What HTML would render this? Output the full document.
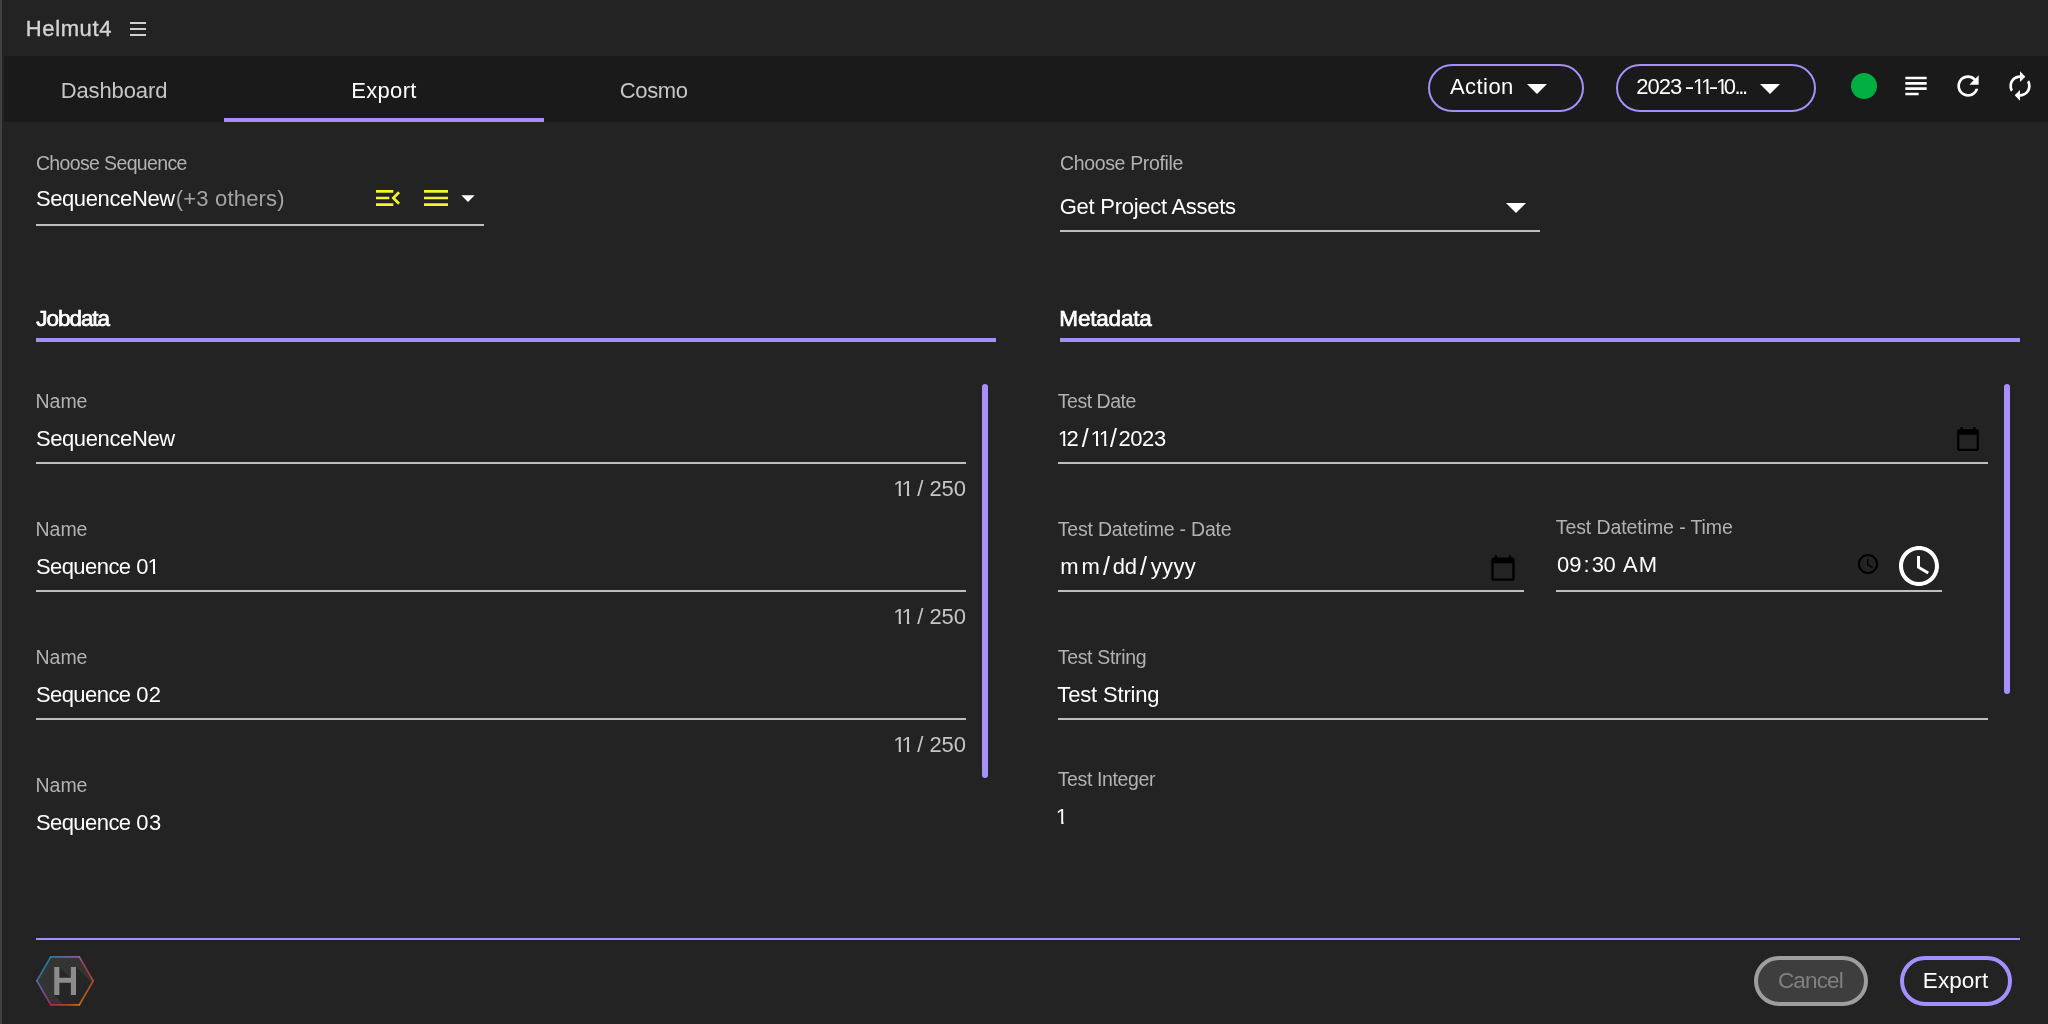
<!DOCTYPE html>
<html><head><meta charset="utf-8"><title>Helmut4</title>
<style>
html,body{margin:0;padding:0;}
body{width:2048px;height:1024px;overflow:hidden;background:#232323;position:relative;font-family:"Liberation Sans",sans-serif;}
.b{position:absolute;display:block;}
.t{position:absolute;display:block;white-space:pre;line-height:1;}
</style></head><body>
<div class="b" style="left:0px;top:0px;width:2px;height:1024px;background:#404040;"></div>
<div class="b" style="left:4px;top:56px;width:2044px;height:66px;background:#1a1a1a;"></div>
<div class="b" style="left:224px;top:118px;width:320px;height:4px;background:#a58ffc;"></div>
<div class="b" style="left:130px;top:22px;width:16px;height:2px;background:#d0d0d0;"></div>
<div class="b" style="left:130px;top:28px;width:16px;height:2px;background:#d0d0d0;"></div>
<div class="b" style="left:130px;top:34px;width:16px;height:2px;background:#d0d0d0;"></div>
<div class="b" style="left:1428px;top:64px;width:156px;height:48px;box-sizing:border-box;border:2px solid #a58ffc;border-radius:24px;"></div>
<div class="b" style="left:1616px;top:64px;width:200px;height:48px;box-sizing:border-box;border:2px solid #a58ffc;border-radius:24px;"></div>
<svg class="b" style="left:1513px;top:64px;" width="48" height="48" viewBox="0 0 24 24"><path fill="#fff" d="M7 10l5 5 5-5z"/></svg>
<svg class="b" style="left:1745.6px;top:64px;" width="48" height="48" viewBox="0 0 24 24"><path fill="#fff" d="M7 10l5 5 5-5z"/></svg>
<div class="b" style="left:1851px;top:72.65px;width:26.4px;height:26.4px;border-radius:50%;background:#00ae42;"></div>
<svg class="b" style="left:1900px;top:70px;" width="32" height="32" viewBox="0 0 24 24"><path fill="#fff" d="M14 17H4v2h10v-2zm6-8H4v2h16V9zM4 15h16v-2H4v2zM4 5v2h16V5H4z"/></svg>
<svg class="b" style="left:1952px;top:70px;" width="32" height="32" viewBox="0 0 24 24"><path fill="#fff" d="M17.65 6.35C16.2 4.9 14.21 4 12 4c-4.42 0-7.99 3.58-7.99 8s3.57 8 7.99 8c3.73 0 6.84-2.55 7.73-6h-2.08c-.82 2.33-3.04 4-5.65 4-3.31 0-6-2.69-6-6s2.69-6 6-6c1.66 0 3.14.69 4.22 1.78L13 11h7V4l-2.35 2.35z"/></svg>
<svg class="b" style="left:2004px;top:70px;" width="32" height="32" viewBox="0 0 24 24"><path fill="#fff" d="M12 6v3l4-4-4-4v3c-4.42 0-8 3.58-8 8 0 1.57.46 3.03 1.24 4.26L6.7 14.8c-.45-.83-.7-1.79-.7-2.8 0-3.31 2.69-6 6-6zm6.76 1.74L17.3 9.2c.44.84.7 1.79.7 2.8 0 3.31-2.69 6-6 6v-3l-4 4 4 4v-3c4.42 0 8-3.58 8-8 0-1.57-.46-3.03-1.24-4.26z"/></svg>
<svg class="b" style="left:372px;top:182px;" width="32" height="32" viewBox="0 0 24 24"><path fill="#f5f52e" d="M3 18h13v-2H3v2zm0-5h10v-2H3v2zm0-7v2h13V6H3zm18 9.59L17.42 12 21 8.41 19.59 7l-5 5 5 5L21 15.59z"/></svg>
<svg class="b" style="left:420px;top:182px;" width="32" height="32" viewBox="0 0 24 24"><path fill="#f5f52e" d="M3 18h18v-2H3v2zm0-5h18v-2H3v2zm0-7v2h18V6H3z"/></svg>
<svg class="b" style="left:452px;top:182px;" width="32" height="32" viewBox="0 0 24 24"><path fill="#fff" d="M7 10l5 5 5-5z"/></svg>
<div class="b" style="left:36px;top:224px;width:448px;height:2px;background:#bebebe;"></div>
<svg class="b" style="left:1492px;top:183px;" width="48" height="48" viewBox="0 0 24 24"><path fill="#fff" d="M7 10l5 5 5-5z"/></svg>
<div class="b" style="left:1060px;top:230px;width:480px;height:2px;background:#bebebe;"></div>
<div class="b" style="left:36px;top:338px;width:960px;height:4px;background:#a58ffc;"></div>
<div class="b" style="left:1060px;top:338px;width:960px;height:4px;background:#a58ffc;"></div>
<div class="b" style="left:36px;top:462px;width:930px;height:2px;background:#bebebe;"></div>
<div class="b" style="left:36px;top:590px;width:930px;height:2px;background:#bebebe;"></div>
<div class="b" style="left:36px;top:718px;width:930px;height:2px;background:#bebebe;"></div>
<div class="b" style="left:982px;top:384px;width:6px;height:394px;background:#a78ffc;border-radius:3px;"></div>
<div class="b" style="left:2004px;top:384px;width:6px;height:310px;background:#a78ffc;border-radius:3px;"></div>
<div class="b" style="left:1058px;top:462px;width:930px;height:2px;background:#bebebe;"></div>
<div class="b" style="left:1058px;top:590px;width:466px;height:2px;background:#bebebe;"></div>
<div class="b" style="left:1556px;top:590px;width:386px;height:2px;background:#bebebe;"></div>
<div class="b" style="left:1058px;top:718px;width:930px;height:2px;background:#bebebe;"></div>
<svg class="b" style="left:1955px;top:425.8px;" width="26" height="26" viewBox="0 0 24 24"><path fill="#000" d="M20 3h-1V1h-2v2H7V1H5v2H4c-1.1 0-2 .9-2 2v16c0 1.1.9 2 2 2h16c1.1 0 2-.9 2-2V5c0-1.1-.9-2-2-2zm0 18H4V8h16v13z"/></svg>
<svg class="b" style="left:1488.9px;top:553.8px;" width="28" height="28" viewBox="0 0 24 24"><path fill="#000" d="M20 3h-1V1h-2v2H7V1H5v2H4c-1.1 0-2 .9-2 2v16c0 1.1.9 2 2 2h16c1.1 0 2-.9 2-2V5c0-1.1-.9-2-2-2zm0 18H4V8h16v13z"/></svg>
<svg class="b" style="left:1856px;top:552px;" width="24" height="24" viewBox="0 0 24 24"><path fill="#000" d="M11.99 2C6.47 2 2 6.48 2 12s4.47 10 9.99 10C17.52 22 22 17.52 22 12S17.52 2 11.99 2zM12 20c-4.42 0-8-3.58-8-8s3.58-8 8-8 8 3.58 8 8-3.58 8-8 8zm.5-13H11v6l5.25 3.15.75-1.23-4.5-2.67z"/></svg>
<svg class="b" style="left:1894.5px;top:542px;" width="48" height="48" viewBox="0 0 24 24"><path fill="#fff" d="M11.99 2C6.47 2 2 6.48 2 12s4.47 10 9.99 10C17.52 22 22 17.52 22 12S17.52 2 11.99 2zM12 20c-4.42 0-8-3.58-8-8s3.58-8 8-8 8 3.58 8 8-3.58 8-8 8zm.5-13H11v6l5.25 3.15.75-1.23-4.5-2.67z"/></svg>
<div class="b" style="left:36px;top:938px;width:1984px;height:2px;background:#a58ffc;"></div>
<div class="b" style="left:1754px;top:956px;width:114px;height:50px;box-sizing:border-box;border:4px solid #9e9e9e;border-radius:25px;background:#3e3e3e;"></div>
<div class="b" style="left:1900px;top:956px;width:112px;height:50px;box-sizing:border-box;border:4px solid #a58ffc;border-radius:25px;"></div>
<svg class="b" style="left:30px;top:950px" width="70" height="62" viewBox="30 950 70 62">
<defs><linearGradient id="e0" gradientUnits="userSpaceOnUse" x1="50.75" y1="956.90" x2="79.35" y2="956.90"><stop offset="0" stop-color="#1a8eb2"/><stop offset="0.5" stop-color="#6c74b8"/><stop offset="1" stop-color="#a260aa"/></linearGradient><linearGradient id="e1" gradientUnits="userSpaceOnUse" x1="79.35" y1="956.90" x2="93.20" y2="980.90"><stop offset="0" stop-color="#a260aa"/><stop offset="0.5" stop-color="#ba3850"/><stop offset="1" stop-color="#ba5030"/></linearGradient><linearGradient id="e2" gradientUnits="userSpaceOnUse" x1="93.20" y1="980.90" x2="79.35" y2="1004.85"><stop offset="0" stop-color="#ba5030"/><stop offset="0.5" stop-color="#ca6018"/><stop offset="1" stop-color="#da7a10"/></linearGradient><linearGradient id="e3" gradientUnits="userSpaceOnUse" x1="79.35" y1="1004.85" x2="50.75" y2="1004.85"><stop offset="0" stop-color="#da7a10"/><stop offset="0.5" stop-color="#ca4828"/><stop offset="1" stop-color="#c22840"/></linearGradient><linearGradient id="e4" gradientUnits="userSpaceOnUse" x1="50.75" y1="1004.85" x2="36.90" y2="980.90"><stop offset="0" stop-color="#c22840"/><stop offset="0.5" stop-color="#8c54a0"/><stop offset="1" stop-color="#5078b2"/></linearGradient><linearGradient id="e5" gradientUnits="userSpaceOnUse" x1="36.90" y1="980.90" x2="50.75" y2="956.90"><stop offset="0" stop-color="#5078b2"/><stop offset="0.5" stop-color="#2888b8"/><stop offset="1" stop-color="#1a8eb2"/></linearGradient></defs><g>
<polygon points="36.90,980.90 50.75,956.90 79.35,956.90 93.20,980.90 79.35,1004.85 50.75,1004.85" fill="#343433"/>
<polygon points="54.23,966.96 59.38,966.96 70.88,978.47 70.88,966.96 76.03,966.96 91.3,982.2 79.0,1004.4 63.4,1004.4 54.23,995.12" fill="#262626"/>
<line x1="50.75" y1="956.90" x2="79.35" y2="956.90" stroke="url(#e0)" stroke-width="1.7" stroke-linecap="round" opacity="0.85"/><line x1="79.35" y1="956.90" x2="93.20" y2="980.90" stroke="url(#e1)" stroke-width="1.7" stroke-linecap="round" opacity="0.85"/><line x1="93.20" y1="980.90" x2="79.35" y2="1004.85" stroke="url(#e2)" stroke-width="1.7" stroke-linecap="round" opacity="0.85"/><line x1="79.35" y1="1004.85" x2="50.75" y2="1004.85" stroke="url(#e3)" stroke-width="1.7" stroke-linecap="round" opacity="0.85"/><line x1="50.75" y1="1004.85" x2="36.90" y2="980.90" stroke="url(#e4)" stroke-width="1.7" stroke-linecap="round" opacity="0.85"/><line x1="36.90" y1="980.90" x2="50.75" y2="956.90" stroke="url(#e5)" stroke-width="1.7" stroke-linecap="round" opacity="0.85"/>
<path d="M54.23 966.96h5.15v10.9h11.5v-10.9h5.15v28.16h-5.15v-12.42h-11.5v12.42h-5.15z" fill="#8c8c8c"/>
</g></svg>
<div id="txt" style="position:absolute;left:0;top:0;width:2048px;height:1024px;will-change:transform;">
<span class="t" style="left:25.80px;top:18px;font-size:22px;letter-spacing:0.621px;color:#d4d4d4;-webkit-text-stroke:0.35px #d4d4d4;">Helmut4</span>
<span class="t" style="left:60.70px;top:80px;font-size:22px;letter-spacing:-0.115px;color:#c6c6c6;">Dashboard</span>
<span class="t" style="left:351.20px;top:80px;font-size:22px;letter-spacing:0.335px;color:#ffffff;">Export</span>
<span class="t" style="left:619.68px;top:80px;font-size:22px;letter-spacing:-0.314px;color:#c6c6c6;">Cosmo</span>
<span class="t" style="left:1449.96px;top:76px;font-size:22px;letter-spacing:0.445px;color:#ffffff;">Action</span>
<span class="t" style="left:1636.19px;top:76px;font-size:22px;letter-spacing:-0.924px;color:#ffffff;">2023</span>
<span class="t" style="left:1684.62px;top:76px;font-size:22px;color:#ffffff;transform:scaleX(1.3);transform-origin:0.98px 0;">-</span>
<span class="t" style="left:1692.75px;top:76px;font-size:22px;clip-path:polygon(1.42px 0,7.78px 0,7.78px 22px,5.48px 22px,5.48px 16px,1.42px 16px);color:#ffffff;">1</span>
<span class="t" style="left:1701.00px;top:76px;font-size:22px;clip-path:polygon(1.42px 0,7.78px 0,7.78px 22px,5.48px 22px,5.48px 16px,1.42px 16px);color:#ffffff;">1</span>
<span class="t" style="left:1708.72px;top:76px;font-size:22px;color:#ffffff;transform:scaleX(1.3);transform-origin:0.98px 0;">-</span>
<span class="t" style="left:1716.00px;top:76px;font-size:22px;clip-path:polygon(1.42px 0,7.78px 0,7.78px 22px,5.48px 22px,5.48px 16px,1.42px 16px);color:#ffffff;">1</span>
<span class="t" style="left:1723.74px;top:76px;font-size:22px;color:#ffffff;">0</span>
<span class="t" style="left:1734.59px;top:76px;font-size:22px;letter-spacing:-2.460px;color:#ffffff;">...</span>
<span class="t" style="left:35.91px;top:154px;font-size:19.5px;letter-spacing:-0.636px;color:#b2b2b2;">Choose Sequence</span>
<span class="t" style="left:35.90px;top:188px;font-size:22px;letter-spacing:-0.387px;color:#ffffff;">SequenceNew</span>
<span class="t" style="left:175.64px;top:188px;font-size:22px;letter-spacing:0.203px;color:#a4a4a4;">(+3 others)</span>
<span class="t" style="left:1059.91px;top:154px;font-size:19.5px;letter-spacing:-0.335px;color:#b2b2b2;">Choose Profile</span>
<span class="t" style="left:1059.79px;top:196px;font-size:22px;letter-spacing:-0.274px;color:#ffffff;">Get Project Assets</span>
<span class="t" style="left:36.25px;top:308px;font-size:22.5px;letter-spacing:-1.037px;color:#ffffff;-webkit-text-stroke:0.7px #fff;">Jobdata</span>
<span class="t" style="left:1059.35px;top:308px;font-size:22.5px;letter-spacing:-0.195px;color:#ffffff;-webkit-text-stroke:0.7px #fff;">Metadata</span>
<span class="t" style="left:35.60px;top:392px;font-size:19.5px;letter-spacing:-0.055px;color:#b2b2b2;">Name</span>
<span class="t" style="left:35.90px;top:428px;font-size:22px;letter-spacing:-0.387px;color:#ffffff;">SequenceNew</span>
<span class="t" style="left:893.25px;top:478px;font-size:22px;clip-path:polygon(1.42px 0,7.78px 0,7.78px 22px,5.48px 22px,5.48px 16px,1.42px 16px);color:#c6c6c6;">1</span>
<span class="t" style="left:901.50px;top:478px;font-size:22px;clip-path:polygon(1.42px 0,7.78px 0,7.78px 22px,5.48px 22px,5.48px 16px,1.42px 16px);color:#c6c6c6;">1</span>
<span class="t" style="left:917.20px;top:478px;font-size:22px;color:#c6c6c6;">/</span>
<span class="t" style="left:929.39px;top:478px;font-size:22px;letter-spacing:-0.026px;color:#c6c6c6;">250</span>
<span class="t" style="left:35.60px;top:520px;font-size:19.5px;letter-spacing:-0.055px;color:#b2b2b2;">Name</span>
<span class="t" style="left:35.90px;top:556px;font-size:22px;letter-spacing:-0.561px;color:#ffffff;">Sequence</span>
<span class="t" style="left:136.24px;top:556px;font-size:22px;color:#ffffff;">0</span>
<span class="t" style="left:147.50px;top:556px;font-size:22px;clip-path:polygon(1.42px 0,7.78px 0,7.78px 22px,5.48px 22px,5.48px 16px,1.42px 16px);color:#ffffff;">1</span>
<span class="t" style="left:893.25px;top:606px;font-size:22px;clip-path:polygon(1.42px 0,7.78px 0,7.78px 22px,5.48px 22px,5.48px 16px,1.42px 16px);color:#c6c6c6;">1</span>
<span class="t" style="left:901.50px;top:606px;font-size:22px;clip-path:polygon(1.42px 0,7.78px 0,7.78px 22px,5.48px 22px,5.48px 16px,1.42px 16px);color:#c6c6c6;">1</span>
<span class="t" style="left:917.20px;top:606px;font-size:22px;color:#c6c6c6;">/</span>
<span class="t" style="left:929.39px;top:606px;font-size:22px;letter-spacing:-0.026px;color:#c6c6c6;">250</span>
<span class="t" style="left:35.60px;top:648px;font-size:19.5px;letter-spacing:-0.055px;color:#b2b2b2;">Name</span>
<span class="t" style="left:35.90px;top:684px;font-size:22px;letter-spacing:-0.561px;color:#ffffff;">Sequence</span>
<span class="t" style="left:136.24px;top:684px;font-size:22px;color:#ffffff;">0</span>
<span class="t" style="left:148.69px;top:684px;font-size:22px;color:#ffffff;">2</span>
<span class="t" style="left:893.25px;top:734px;font-size:22px;clip-path:polygon(1.42px 0,7.78px 0,7.78px 22px,5.48px 22px,5.48px 16px,1.42px 16px);color:#c6c6c6;">1</span>
<span class="t" style="left:901.50px;top:734px;font-size:22px;clip-path:polygon(1.42px 0,7.78px 0,7.78px 22px,5.48px 22px,5.48px 16px,1.42px 16px);color:#c6c6c6;">1</span>
<span class="t" style="left:917.20px;top:734px;font-size:22px;color:#c6c6c6;">/</span>
<span class="t" style="left:929.39px;top:734px;font-size:22px;letter-spacing:-0.026px;color:#c6c6c6;">250</span>
<span class="t" style="left:35.60px;top:776px;font-size:19.5px;letter-spacing:-0.055px;color:#b2b2b2;">Name</span>
<span class="t" style="left:35.90px;top:812px;font-size:22px;letter-spacing:-0.561px;color:#ffffff;">Sequence</span>
<span class="t" style="left:136.24px;top:812px;font-size:22px;color:#ffffff;">0</span>
<span class="t" style="left:148.96px;top:812px;font-size:22px;color:#ffffff;">3</span>
<span class="t" style="left:1057.76px;top:392px;font-size:19.5px;letter-spacing:-0.472px;color:#b2b2b2;">Test Date</span>
<span class="t" style="left:1057.75px;top:428px;font-size:22px;clip-path:polygon(1.42px 0,7.78px 0,7.78px 22px,5.48px 22px,5.48px 16px,1.42px 16px);color:#ffffff;">1</span>
<span class="t" style="left:1066.49px;top:428px;font-size:22px;color:#ffffff;">2</span>
<span class="t" style="left:1081.80px;top:426px;font-size:25px;color:#ffffff;">/</span>
<span class="t" style="left:1090.50px;top:428px;font-size:22px;clip-path:polygon(1.42px 0,7.78px 0,7.78px 22px,5.48px 22px,5.48px 16px,1.42px 16px);color:#ffffff;">1</span>
<span class="t" style="left:1098.75px;top:428px;font-size:22px;clip-path:polygon(1.42px 0,7.78px 0,7.78px 22px,5.48px 22px,5.48px 16px,1.42px 16px);color:#ffffff;">1</span>
<span class="t" style="left:1110.00px;top:426px;font-size:25px;color:#ffffff;">/</span>
<span class="t" style="left:1118.39px;top:428px;font-size:22px;letter-spacing:-0.392px;color:#ffffff;">2023</span>
<span class="t" style="left:1057.76px;top:520px;font-size:19.5px;letter-spacing:-0.202px;color:#b2b2b2;">Test Datetime - Date</span>
<span class="t" style="left:1060.24px;top:556px;font-size:22px;letter-spacing:2.948px;color:#ffffff;">mm</span>
<span class="t" style="left:1102.90px;top:554px;font-size:25px;color:#ffffff;">/</span>
<span class="t" style="left:1112.78px;top:556px;font-size:22px;letter-spacing:-0.342px;color:#ffffff;">dd</span>
<span class="t" style="left:1140.00px;top:554px;font-size:25px;color:#ffffff;">/</span>
<span class="t" style="left:1150.75px;top:556px;font-size:22px;letter-spacing:0.331px;color:#ffffff;">yyyy</span>
<span class="t" style="left:1555.76px;top:518px;font-size:19.5px;letter-spacing:-0.089px;color:#b2b2b2;">Test Datetime - Time</span>
<span class="t" style="left:1556.94px;top:554px;font-size:22px;letter-spacing:0.021px;color:#ffffff;">09</span>
<span class="t" style="left:1583.49px;top:554px;font-size:22px;color:#ffffff;">:</span>
<span class="t" style="left:1591.66px;top:554px;font-size:22px;letter-spacing:-0.479px;color:#ffffff;">30</span>
<span class="t" style="left:1622.96px;top:554px;font-size:22px;letter-spacing:1.246px;color:#ffffff;">AM</span>
<span class="t" style="left:1057.76px;top:648px;font-size:19.5px;letter-spacing:-0.334px;color:#b2b2b2;">Test String</span>
<span class="t" style="left:1057.31px;top:684px;font-size:22px;letter-spacing:-0.163px;color:#ffffff;">Test String</span>
<span class="t" style="left:1057.76px;top:770px;font-size:19.5px;letter-spacing:-0.386px;color:#b2b2b2;">Test Integer</span>
<span class="t" style="left:1055.75px;top:806px;font-size:22px;clip-path:polygon(1.42px 0,7.78px 0,7.78px 22px,5.48px 22px,5.48px 16px,1.42px 16px);color:#ffffff;">1</span>
<span class="t" style="left:1777.96px;top:970px;font-size:22.5px;letter-spacing:-0.841px;color:#808080;">Cancel</span>
<span class="t" style="left:1922.85px;top:970px;font-size:22.5px;letter-spacing:0.056px;color:#ffffff;">Export</span>
</div>
</body></html>
